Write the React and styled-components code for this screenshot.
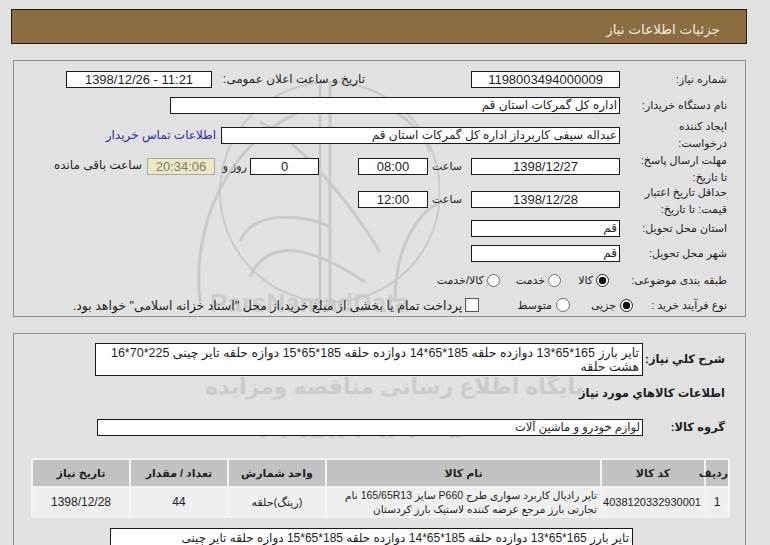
import React from "react";
import styled, { createGlobalStyle } from "styled-components";

const GlobalStyle = createGlobalStyle`
  body {
    margin: 0;
    background: #e1e1e1;
    font-family: "Liberation Sans", "DejaVu Sans", sans-serif;
    color: #1e1e1e;
  }
`;

const Page = styled.div`
  direction: rtl;
  position: relative;
  padding: 9px 23px 0 11px;
  height: 545px;
  box-sizing: border-box;
  overflow: hidden;
`;

const Header = styled.div`
  height: 35px;
  box-sizing: border-box;
  border: 1px solid #1c1c1c;
  background: #8c6d40;
  color: #f3ece0;
  font-size: 13.5px;
  padding: 11px 26px 0 0;
`;

const Panel = styled.section`
  position: relative;
  z-index: 1;
  border: 1px solid #8e8e8e;
  margin: ${(p) => p.$mt}px 1px 0 2px;
  padding: ${(p) => p.$pad};
  box-sizing: border-box;
  height: ${(p) => (p.$h ? `${p.$h}px` : "auto")};
`;

const Row = styled.div`
  display: flex;
  align-items: ${(p) => (p.$top ? "flex-start" : "center")};
  height: ${(p) => p.$h}px;
`;

const Label = styled.div`
  flex: none;
  width: ${(p) => p.$w || 107}px;
  font-size: 11px;
  line-height: 17px;
  box-sizing: border-box;
  white-space: nowrap;
  padding-right: ${(p) => p.$pr || 0}px;
`;

const BoldLabel = styled(Label)`
  font-weight: bold;
  font-size: 11.5px;
`;

const Field = styled.div`
  flex: none;
  width: ${(p) => p.$w}px;
  height: ${(p) => p.$h || 17}px;
  box-sizing: border-box;
  border: 1px solid #1a1a1a;
  background: #fff;
  font-size: ${(p) => p.$fs || 12}px;
  line-height: ${(p) => p.$lh || 15}px;
  text-align: ${(p) => (p.$right ? "right" : "center")};
  padding: ${(p) => p.$pad || "0 2px"};
  margin-right: ${(p) => p.$mr || 0}px;
  margin-top: ${(p) => p.$mt || 0}px;
  white-space: ${(p) => (p.$wrap ? "normal" : "nowrap")};
  overflow: hidden;
`;

const Remaining = styled(Field)`
  background: #ece8c2;
  border-color: #a8a8a8;
  color: #7d7d6a;
`;

const Cell = styled.div`
  flex: none;
  width: ${(p) => p.$w}px;
  box-sizing: border-box;
  font-size: ${(p) => p.$fs || 11}px;
  line-height: 17px;
  padding-right: ${(p) => p.$pr || 0}px;
  margin-right: ${(p) => p.$mr || 0}px;
  margin-top: ${(p) => p.$mt || 0}px;
  white-space: nowrap;
`;

const Text = styled.span`
  font-size: ${(p) => p.$fs || 11}px;
  margin-right: ${(p) => p.$mr || 0}px;
  margin-top: ${(p) => p.$mt || 0}px;
  white-space: nowrap;
`;

const ContactLink = styled.a`
  font-size: 12px;
  color: #2a2aa6;
  text-decoration: none;
  margin-right: 5px;
`;

const Radio = styled.span`
  flex: none;
  width: ${(p) => p.$s || 13}px;
  height: ${(p) => p.$s || 13}px;
  box-sizing: border-box;
  border-radius: 50%;
  border: 1px solid ${(p) => (p.$on ? "#222" : "#6a6a6a")};
  background: ${(p) =>
    p.$on ? "radial-gradient(circle, #111 0 3.5px, #fff 4px)" : "#fff"};
  margin-right: ${(p) => p.$mr || 0}px;
`;

const Check = styled.span`
  flex: none;
  width: 14px;
  height: 14px;
  box-sizing: border-box;
  border: 1px solid #555;
  background: linear-gradient(to left, #fff 60%, #e6e6e6);
  margin-right: ${(p) => p.$mr || 0}px;
`;

const Table = styled.table`
  width: 699px;
  margin: 13px -3px 0 0;
  border-collapse: separate;
  border-spacing: 2px;
  background: #f3f3f3;
  table-layout: fixed;
`;

const Th = styled.th`
  background: #c2c2c2;
  height: 26px;
  font-weight: bold;
  font-size: 11px;
  color: #222;
  padding: 0;
`;

const Td = styled.td`
  background: #efefef;
  height: 28px;
  font-size: ${(p) => p.$fs || 11}px;
  line-height: 14px;
  padding: 0 3px;
  text-align: ${(p) => (p.$right ? "right" : "center")};
`;

const Watermark = styled.div`
  position: absolute;
  inset: 0;
  z-index: 0;
  pointer-events: none;
  color: #cbcbcb;
`;

const WmText = styled.div`
  position: absolute;
  left: ${(p) => p.$x}px;
  top: ${(p) => p.$y}px;
  font-size: ${(p) => p.$fs}px;
  font-weight: bold;
  white-space: nowrap;
  direction: rtl;
`;

const Logo = styled.svg`
  position: absolute;
  left: 180px;
  top: 62px;
`;

export default function App() {
  return (
    <>
      <GlobalStyle />
      <Page>
        <Watermark>
          <Logo width="260" height="250" viewBox="0 0 260 250" fill="none" stroke="#c9c9c9" strokeWidth="3">
            <path d="M20 240 C10 150 60 60 150 40 C200 30 240 60 250 90" />
            <path d="M215 240 C215 180 240 150 260 140" />
            <path d="M70 215 C90 170 140 190 185 220" />
            <path d="M60 180 C70 150 120 150 150 165" />
            <path d="M140 20 L140 245 M150 20 L150 245" />
            <path d="M80 60 C120 80 170 140 200 190" />
            <circle cx="150" cy="130" r="110" strokeWidth="2" />
          </Logo>
          <WmText $x={210} $y={288} $fs={26}>ParsNamadData</WmText>
          <WmText $x={205} $y={374} $fs={22}>پایگاه اطلاع رسانی مناقصه ومزایده</WmText>
          <WmText $x={240} $y={412} $fs={28}>۰۲۱-۸۸۳۴۹۶۷۰-۵</WmText>
        </Watermark>

        <Header>جزئیات اطلاعات نیاز</Header>

        <Panel $mt={16} $pad="5px 18px 0 0" $h={257}>
          <Row $h={27}>
            <Label>شماره نیاز:</Label>
            <Field $w={149} $fs={13}>1198003494000009</Field>
            <Cell $w={153} $mr={106} $fs={12}>تاریخ و ساعت اعلان عمومی:</Cell>
            <Field $w={146} $fs={13} dir="ltr">1398/12/26 - 11:21</Field>
          </Row>
          <Row $h={25}>
            <Label>نام دستگاه خریدار:</Label>
            <Field $w={450} $right>اداره کل گمرکات استان قم</Field>
          </Row>
          <Row $h={34}>
            <Label>
              ایجاد کننده
              <br />
              درخواست:
            </Label>
            <Field $w={399} $right>عبداله سیفی کاربرداز اداره کل گمرکات استان قم</Field>
            <ContactLink href="#">اطلاعات تماس خریدار</ContactLink>
          </Row>
          <Row $h={32} $top>
            <Label>
              مهلت ارسال پاسخ:
              <br />
              تا تاریخ:
            </Label>
            <Field $w={149} $fs={13} $mt={6}>1398/12/27</Field>
            <Cell $w={43} $pr={9} $mt={6}>ساعت</Cell>
            <Field $w={70} $fs={13} $mt={6}>08:00</Field>
            <Field $w={69} $fs={13} $mr={39} $mt={6}>0</Field>
            <Cell $w={35} $pr={3} $mt={6}>روز و</Cell>
            <Remaining $w={68} $fs={13} $mt={6}>20:34:06</Remaining>
            <Text $mr={5} $mt={6} $fs={12}>ساعت باقی مانده</Text>
          </Row>
          <Row $h={33} $top>
            <Label>
              حداقل تاریخ اعتبار
              <br />
              قیمت: تا تاریخ:
            </Label>
            <Field $w={149} $fs={13} $mt={7}>1398/12/28</Field>
            <Cell $w={43} $pr={9} $mt={7}>ساعت</Cell>
            <Field $w={70} $fs={13} $mt={7}>12:00</Field>
          </Row>
          <Row $h={23}>
            <Label>استان محل تحویل:</Label>
            <Field $w={149} $right>قم</Field>
          </Row>
          <Row $h={27}>
            <Label>شهر محل تحویل:</Label>
            <Field $w={149} $right>قم</Field>
          </Row>
          <Row $h={27}>
            <Label>طبقه بندی موضوعی:</Label>
            <Radio $on $mr={11} $s={13} />
            <Text $mr={3}>کالا</Text>
            <Radio $mr={17} />
            <Text $mr={3}>خدمت</Text>
            <Radio $mr={16} />
            <Text $mr={3}>کالا/خدمت</Text>
          </Row>
          <Row $h={22}>
            <Label $w={94}>نوع فرآیند خرید :</Label>
            <Radio $on $s={13} />
            <Text $mr={4}>جزیی</Text>
            <Radio $mr={21} $s={14} />
            <Text $mr={4}>متوسط</Text>
            <Check $mr={38} />
            <Text $mr={3} $fs={12.5}>پرداخت تمام یا بخشی از مبلغ خرید،از محل "اسناد خزانه اسلامی" خواهد بود.</Text>
          </Row>
        </Panel>

        <Panel $mt={16} $pad="9px 18px 0 0" $h={230}>
          <Row $h={33}>
            <BoldLabel $w={84} $pr={2}>شرح کلي نياز:</BoldLabel>
            <Field $w={548} $h={33} $right $wrap $fs={12.5} $lh={14} $pad="2px 3px 0 6px">
              تایر بارز 165*65*13 دوازده حلقه 185*65*14 دوازده حلقه 185*65*15 دوازه حلقه تایر چینی 225*70*16 هشت حلقه
            </Field>
          </Row>
          <Row $h={34}>
            <BoldLabel $w={200} $pr={2}>اطلاعات کالاهاي مورد نياز</BoldLabel>
          </Row>
          <Row $h={35}>
            <BoldLabel $w={84} $pr={2}>گروه کالا:</BoldLabel>
            <Field $w={546} $right $fs={11.5}>لوازم خودرو و ماشین آلات</Field>
          </Row>
          <Table>
            <colgroup>
              <col style={{ width: 22 }} />
              <col style={{ width: 102 }} />
              <col style={{ width: 273 }} />
              <col style={{ width: 96 }} />
              <col style={{ width: 96 }} />
              <col style={{ width: 96 }} />
            </colgroup>
            <thead>
              <tr>
                <Th>ردیف</Th>
                <Th>کد کالا</Th>
                <Th>نام کالا</Th>
                <Th>واحد شمارش</Th>
                <Th>تعداد / مقدار</Th>
                <Th>تاریخ نیاز</Th>
              </tr>
            </thead>
            <tbody>
              <tr>
                <Td $fs={12}>1</Td>
                <Td $fs={11}>4038120332930001</Td>
                <Td $right $fs={10.5}>تایر رادیال کاربرد سواری طرح P660 سایز 165/65R13 نام تجارتی بارز مرجع عرضه کننده لاستیک بارز کردستان</Td>
                <Td>(رینگ)حلقه</Td>
                <Td $fs={12}>44</Td>
                <Td $fs={12}>1398/12/28</Td>
              </tr>
            </tbody>
          </Table>
          <Field $w={523} $h={30} $mr={94} $mt={10} $right $fs={12} $lh={16} $pad="1px 3px 0 2px">
            تایر بارز 165*65*13 دوازده حلقه 185*65*14 دوازده حلقه 185*65*15 دوازه حلقه تایر چینی
          </Field>
        </Panel>
      </Page>
    </>
  );
}
